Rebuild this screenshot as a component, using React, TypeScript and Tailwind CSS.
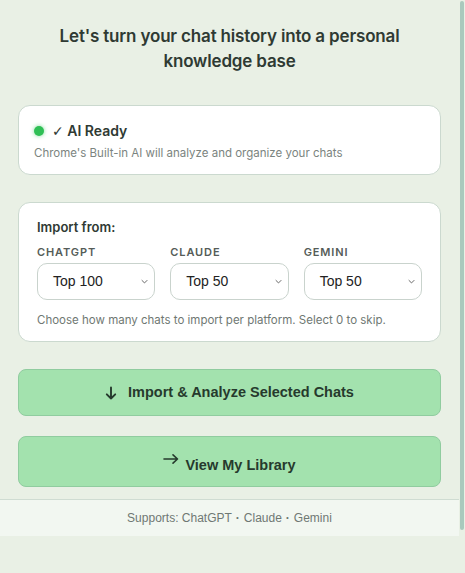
import React from 'react';

const platforms = [
  { name: 'ChatGPT', value: 'Top 100' },
  { name: 'Claude', value: 'Top 50' },
  { name: 'Gemini', value: 'Top 50' },
];

const Chevron = () => (
  <svg width="9" height="9" viewBox="0 0 10 10" className="text-[#666]">
    <path d="M2.2 3.8 L5 6.6 L7.8 3.8" fill="none" stroke="currentColor" strokeWidth="1.1" strokeLinecap="round" strokeLinejoin="round" />
  </svg>
);

const ArrowDown = () => (
  <svg width="12" height="14" viewBox="0 0 12 14" className="text-[#263a2d]">
    <path d="M6 1.5 V12.5 M1.8 8.3 L6 12.5 L10.2 8.3" fill="none" stroke="currentColor" strokeWidth="1.9" strokeLinecap="round" strokeLinejoin="round" />
  </svg>
);

const ArrowRight = () => (
  <svg width="16" height="12" viewBox="0 0 16 12" className="text-[#263a2d]">
    <path d="M1 6 H14.5 M10 1.8 L14.5 6 L10 10.2" fill="none" stroke="currentColor" strokeWidth="1.6" strokeLinecap="round" strokeLinejoin="round" />
  </svg>
);

const App: React.FC = () => {
  return (
    <div className="flex min-h-[573px] bg-[#e9f0e5] font-['Inter',sans-serif]">
      <div className="w-[459px] flex flex-col">
        <main className="px-[18px] pt-[24px] pb-[12px]">
          {/* Heading */}
          <h1 className="text-center text-[17px] font-semibold leading-[25px] tracking-[-0.01em] text-[#2f3a33]">
            Let's turn your chat history into a personal knowledge base
          </h1>

          {/* AI status */}
          <section className="mt-[31px] rounded-[12px] border border-[#cbd9cf] bg-white px-[15px] pt-[15px] pb-[12px]">
            <div className="flex items-center gap-[8px] h-[20px]">
              <span className="w-[10px] h-[10px] rounded-full bg-[#2fbf55] shadow-[0_0_4px_#7fdc98]"></span>
              <span className="text-[14px] font-semibold text-[#2f3a33]">
                <span className="font-['DejaVu_Sans',sans-serif] font-normal text-[14px]">✓</span> AI Ready
              </span>
            </div>
            <p className="mt-[3px] text-[11.5px] leading-[18px] text-[#7b8480]">
              Chrome's Built-in AI will analyze and organize your chats
            </p>
          </section>

          {/* Import options */}
          <section className="mt-[27px] rounded-[12px] border border-[#cbd9cf] bg-white px-[18px] pt-[15px] pb-[12px]">
            <h2 className="text-[13px] font-semibold leading-[18px] text-[#2f3a33]">Import from:</h2>
            <div className="mt-[9px] grid grid-cols-3 gap-[15px]">
              {platforms.map((p) => (
                <div key={p.name}>
                  <div className="text-[11px] font-semibold uppercase tracking-[0.08em] leading-[14px] text-[#555c58]">
                    {p.name}
                  </div>
                  <div className="mt-[4px] h-[37px] rounded-[10px] border border-[#c9d3cd] bg-white pl-[15px] pr-[5px] flex items-center justify-between font-['Liberation_Sans',sans-serif] text-[14px] text-[#222]">
                    <span>{p.value}</span>
                    <Chevron />
                  </div>
                </div>
              ))}
            </div>
            <p className="mt-[11px] text-[11.5px] leading-[18px] text-[#6f7873]">
              Choose how many chats to import per platform. Select 0 to skip.
            </p>
          </section>

          {/* Actions */}
          <button className="mt-[27px] w-full h-[47px] rounded-[8px] border border-[#90cc9f] bg-[#a3e2ae] flex items-center justify-center gap-[11px] font-['Liberation_Sans',sans-serif] text-[14.5px] font-bold text-[#263a2d]">
            <ArrowDown />
            <span>Import &amp; Analyze Selected Chats</span>
          </button>
          <button className="mt-[20px] w-full h-[51px] rounded-[8px] border border-[#90cc9f] bg-[#a3e2ae] pt-[6px] flex items-center justify-center gap-[6px] font-['Liberation_Sans',sans-serif] text-[14.5px] font-bold text-[#263a2d]">
            <span className="mb-[11px]">
              <ArrowRight />
            </span>
            <span className="leading-[20px]">View My Library</span>
          </button>
        </main>

        <footer className="h-[37px] border-t border-[#cfdcd2] bg-[#f2f7f1] flex items-center justify-center font-['Liberation_Sans',sans-serif] text-[12px] text-[#6f7873]">
          Supports: ChatGPT <span className="mx-[4px] font-bold">·</span> Claude <span className="mx-[4px] font-bold">·</span> Gemini
        </footer>
      </div>

      {/* Scrollbar */}
      <div className="w-[6px] pt-[1px]">
        <div className="ml-[1px] w-[4px] h-[529px] rounded-full bg-[#a9c9bd]"></div>
      </div>
    </div>
  );
};

export default App;
